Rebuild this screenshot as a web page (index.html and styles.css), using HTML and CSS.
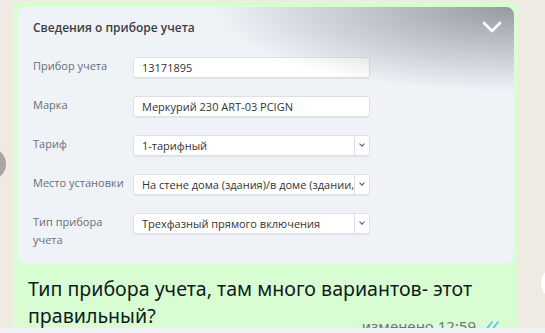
FILE: index.html
```html
<!DOCTYPE html>
<html lang="ru">
<head>
    <meta charset="UTF-8">
    <title>Чат</title>
    <link rel="stylesheet" href="styles.css">
</head>
<body>
    <div class="chat">
        <div class="side-btn"></div>
        <div class="side-btn-right"></div>
        <div class="bubble">
            <div class="shot">
                <div class="shade"></div>
                <svg class="chevron" width="20" height="12" viewBox="0 0 20 12">
                    <path d="M2 2 L10 10 L18 2" fill="none" stroke="#fff" stroke-width="2.6" stroke-linecap="round" stroke-linejoin="round"/>
                </svg>
                <div class="shot-title">Сведения о приборе учета</div>
                <div class="form">
                    <div class="label">Прибор учета</div>
                    <div class="field">13171895</div>

                    <div class="label">Марка</div>
                    <div class="field">Меркурий 230 ART-03 PCIGN</div>

                    <div class="label">Тариф</div>
                    <div class="field select"><span class="value">1-тарифный</span><span class="arrow"></span></div>

                    <div class="label">Место установки</div>
                    <div class="field select"><span class="value">На стене дома (здания)/в доме (здании, Т</span><span class="arrow"></span></div>

                    <div class="label two-line">Тип прибора учета</div>
                    <div class="field select"><span class="value">Трехфазный прямого включения</span><span class="arrow"></span></div>
                </div>
            </div>
            <div class="caption">
                <p class="text">Тип прибора учета, там много вариантов- этот правильный?</p>
                <span class="meta">изменено 12:59
                    <svg class="ticks" width="18" height="12" viewBox="0 0 18 12">
                        <path d="M1 11 L8 2 M7 11 L14 2" fill="none" stroke="#53bdeb" stroke-width="1.6" stroke-linecap="round"/>
                    </svg>
                </span>
            </div>
        </div>
    </div>
    <div class="composer"></div>
</body>
</html>
```

FILE: styles.css
```css
body {
    margin: 0;
    background-color: #efeae2;
    font-family: "Open Sans", "Noto Sans", sans-serif;
    overflow: hidden;
}

.chat {
    height: 328px;
    overflow: hidden;
    padding: 2px 0 0 13px;
    box-sizing: border-box;
    position: relative;
}

/* кнопки прокрутки по краям, видны только краешком */
.side-btn {
    position: absolute;
    left: -26px;
    top: 148px;
    width: 32px;
    height: 32px;
    border-radius: 50%;
    background-color: #a9a6a2;
}

.side-btn-right {
    position: absolute;
    right: -30px;
    top: 266px;
    width: 34px;
    height: 34px;
    border-radius: 50%;
    background-color: #ffffff;
}

.bubble {
    width: 505px;
    background-color: #d9fdd3;
    border-radius: 8px;
    padding: 5px 4px 0 4px;
    box-sizing: border-box;
}

.shot {
    position: relative;
    height: 256px;
    background-color: #eff2f7;
    border-radius: 8px;
    overflow: hidden;
    padding: 13px 0 0 16px;
    box-sizing: border-box;
}

.shade {
    position: absolute;
    top: 0;
    right: 0;
    width: 300px;
    height: 85px;
    background: radial-gradient(ellipse 100% 100% at 100% 0%, rgba(60, 66, 80, 0.5), rgba(60, 66, 80, 0) 100%);
}

.chevron {
    position: absolute;
    top: 14px;
    right: 12px;
}

.shot-title {
    font-size: 12px;
    font-weight: 600;
    color: #3b3f45;
    line-height: 16px;
}

.form {
    margin-top: 21px;
    display: grid;
    grid-template-columns: 100px 237px;
    row-gap: 18px;
    align-items: start;
}

.label {
    font-size: 11px;
    color: #6a6f75;
    line-height: 18px;
}

.two-line {
    width: 80px;
}

.field {
    height: 21px;
    background-color: #ffffff;
    border: 1px solid #dde1e6;
    border-radius: 3px;
    box-shadow: 0 1px 1px rgba(0, 0, 0, 0.06);
    box-sizing: border-box;
    font-size: 11px;
    color: #333;
    line-height: 19px;
    padding-left: 8px;
    white-space: nowrap;
    overflow: hidden;
}

.select {
    display: flex;
    padding-left: 0;
}

.select .value {
    flex: 1;
    overflow: hidden;
    padding-left: 8px;
}

.select .arrow {
    width: 14px;
    border-left: 1px solid #dde1e6;
    position: relative;
}

.select .arrow::after {
    content: "";
    position: absolute;
    left: 5px;
    top: 6px;
    width: 3px;
    height: 3px;
    border-right: 1.5px solid #555;
    border-bottom: 1.5px solid #555;
    transform: rotate(45deg);
}

.caption {
    position: relative;
    padding: 12px 0 0 11px;
    height: 60px;
}

.text {
    margin: 0;
    font-family: "Noto Sans", "Open Sans", sans-serif;
    font-size: 19.6px;
    line-height: 27px;
    color: #111b21;
    width: 470px;
}

.meta {
    position: absolute;
    right: 12px;
    top: 53px;
    font-family: "Noto Sans", sans-serif;
    font-size: 15px;
    color: #667781;
    display: flex;
    align-items: center;
    gap: 8px;
}

.composer {
    height: 5px;
    background-color: #f0f2f5;
}
```
